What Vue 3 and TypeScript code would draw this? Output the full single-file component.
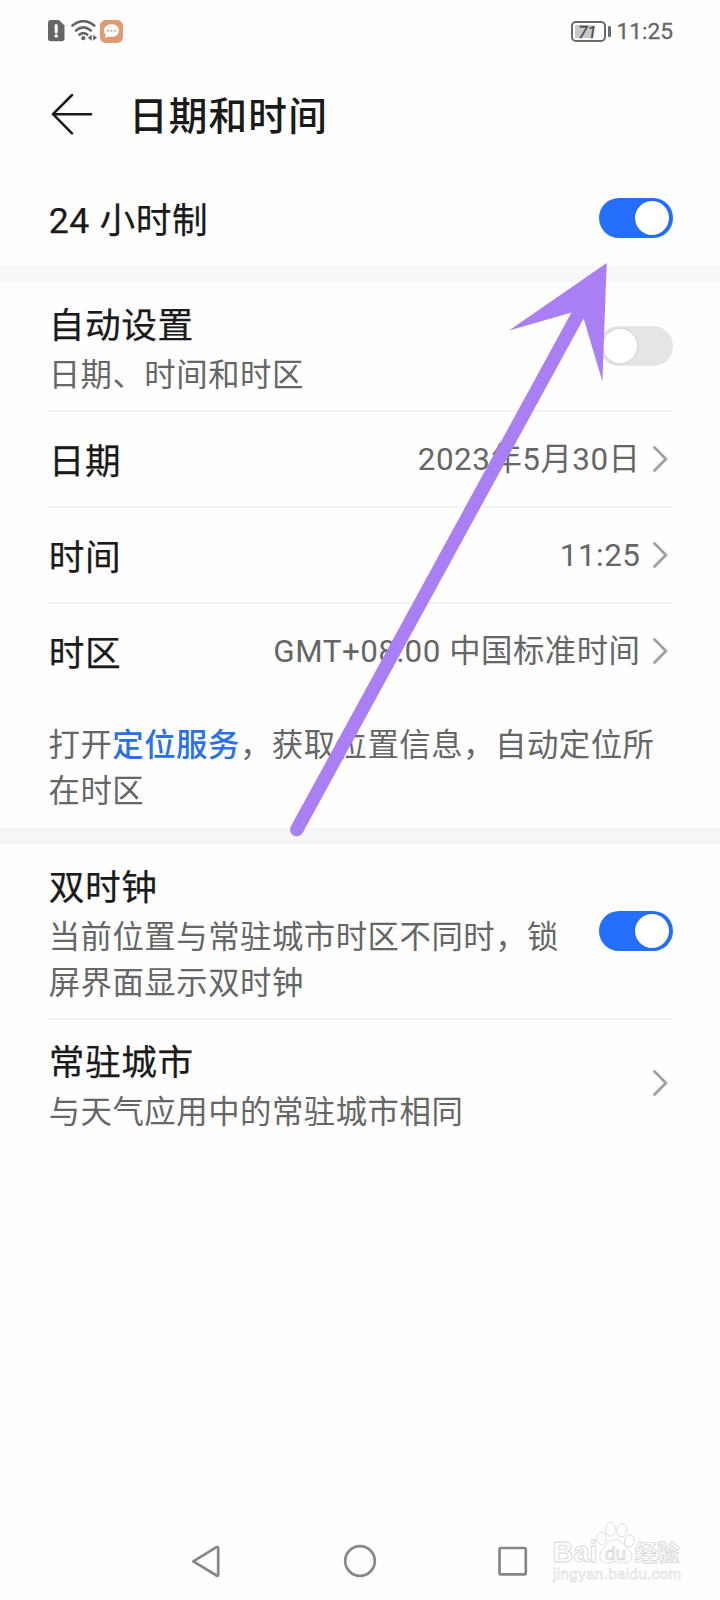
<script setup lang="ts">
import { ref } from 'vue'

interface ValueRow {
  label: string
  value: string
}

const use24Hour = ref(true)
const autoSet = ref(false)
const dualClock = ref(true)

const valueRows: ValueRow[] = [
  { label: '日期', value: '2023年5月30日' },
  { label: '时间', value: '11:25' },
  { label: '时区', value: 'GMT+08:00 中国标准时间' },
]
</script>

<template>
  <div class="screen">
    <header class="status">
      <div class="status-icons">
        <svg class="sim" width="17" height="22" viewBox="0 0 17 22">
          <path d="M3 0H11L16.5 5.5V18.5Q16.5 21.3 13.7 21.3H2.8Q0 21.3 0 18.5V3Q0 0 3 0Z" fill="#666" />
          <path d="M8.2 5.6V12" stroke="#fff" stroke-width="3" stroke-linecap="round" />
          <circle cx="8.2" cy="16" r="1.8" fill="#fff" />
        </svg>
        <svg class="wifi" width="26" height="22" viewBox="0 0 26 22">
          <g fill="none" stroke="#666" stroke-width="2.6" stroke-linecap="round">
            <path d="M1.5 5.6Q12.5 -3.4 23.2 5.6" />
            <path d="M5 10.5Q12.4 4.4 19.8 10.5" />
            <path d="M8.5 14.6Q12.4 11.6 16.2 14.6" />
          </g>
          <circle cx="12.3" cy="18.2" r="2.1" fill="#666" />
          <path d="M20.7 14.6V20.8L16.8 17.7ZM22.2 14.6V20.8L26 17.7Z" fill="#666" />
        </svg>
        <svg class="chat" width="24" height="24" viewBox="0 0 24 24">
          <rect width="23" height="23" rx="6" fill="#e09a73" />
          <path d="M11.6 4.3C16 4.3 19 7 19 10.6S16 17 11.6 17C10.6 17 9.6 16.9 8.7 16.5L5.2 18.2L5.6 14.6C4.5 13.5 4 12.1 4 10.6C4 7 7.2 4.3 11.6 4.3Z" fill="#fff" />
          <g fill="#e09a73">
            <circle cx="7.9" cy="10.7" r="1" /><circle cx="11.5" cy="10.7" r="1" /><circle cx="15.1" cy="10.7" r="1" />
          </g>
        </svg>
      </div>
      <div class="status-right">
        <div class="battery"><span>71</span></div>
        <i class="nub"></i>
        <span class="clock">11:25</span>
      </div>
    </header>

    <div class="heading">
      <svg width="42" height="42" viewBox="0 0 42 42" fill="none" stroke="#1a1a1a" stroke-width="2.5" stroke-linecap="round" stroke-linejoin="round">
        <path d="M21 1L2 20.2L21 39.4M2 20.2H40" />
      </svg>
      <h1>日期和时间</h1>
    </div>

    <section>
      <div class="row single">
        <span class="label">24 小时制</span>
        <button class="switch" :class="{ on: use24Hour }" @click="use24Hour = !use24Hour"><i></i></button>
      </div>
    </section>

    <div class="band"></div>

    <section>
      <div class="row auto">
        <div class="stack">
          <span class="label">自动设置</span>
          <span class="sub">日期、时间和时区</span>
        </div>
        <button class="switch" :class="{ on: autoSet }" @click="autoSet = !autoSet"><i></i></button>
      </div>
      <div v-for="row in valueRows" :key="row.label" class="row value-row">
        <span class="label">{{ row.label }}</span>
        <span class="value">{{ row.value }}</span>
        <svg class="chevron" width="16" height="28" viewBox="0 0 16 28"><path d="M1.5 2.4L13 14L1.5 25.6" /></svg>
      </div>
      <p class="note">打开<a>定位服务</a>，获取位置信息，自动定位所<br />在时区</p>
    </section>

    <div class="band"></div>

    <section>
      <div class="row dual">
        <div class="stack">
          <span class="label">双时钟</span>
          <span class="sub">当前位置与常驻城市时区不同时，锁<br />屏界面显示双时钟</span>
        </div>
        <button class="switch" :class="{ on: dualClock }" @click="dualClock = !dualClock"><i></i></button>
      </div>
      <div class="row city">
        <div class="stack">
          <span class="label">常驻城市</span>
          <span class="sub">与天气应用中的常驻城市相同</span>
        </div>
        <svg class="chevron" width="16" height="28" viewBox="0 0 16 28"><path d="M1.5 2.4L13 14L1.5 25.6" /></svg>
      </div>
    </section>

    <nav class="navbar">
      <svg width="370" height="40" viewBox="0 0 370 40" fill="none" stroke="#878787" stroke-width="2.7" stroke-linejoin="round">
        <path d="M23.3 21.3L46.5 7.2Q48.2 6.4 48.2 8.2V34.6Q48.2 36.4 46.5 35.5Z" />
        <circle cx="190" cy="21" r="14.8" />
        <rect x="329.5" y="8" width="26.3" height="26.3" rx="1.2" />
      </svg>
    </nav>

    <svg class="pointer" width="720" height="860" viewBox="0 0 720 860" fill="#a97ff3">
      <path d="M606.7 263L509 330.5L571.5 312.5L290.9 826.3A6.7 6.7 0 0 0 302.7 832.7L583.6 318.5L602.4 381.5Z" />
    </svg>

    <svg class="watermark" width="150" height="70" viewBox="0 0 150 70">
      <g fill="#fff" stroke="#d8d8d8" stroke-width="0.9">
        <text x="11.5" y="42" font-size="29" font-weight="bold" textLength="45" lengthAdjust="spacingAndGlyphs">Bai</text>
        <ellipse cx="60.5" cy="18.3" rx="4.7" ry="6.3" transform="rotate(-8 60.5 18.3)" />
        <ellipse cx="69.5" cy="9.3" rx="5" ry="6.9" />
        <ellipse cx="81" cy="10.3" rx="5" ry="6.7" transform="rotate(12 81 10.3)" />
        <ellipse cx="88.3" cy="21" rx="4.7" ry="6.3" transform="rotate(12 88.3 21)" />
        <path d="M74.5 19.5C81.5 19.5 82.5 25.5 88 30C93.5 35 91 43 83.5 43C79 43 78 41.8 74.5 41.8S70 43 66 43C58.5 43 56.5 35 61.5 29.5C66 25 68 19.5 74.5 19.5Z" />
        <text x="64" y="40" font-size="19" textLength="21">du</text>
        <text class="cjk" x="93.5" y="40.5" font-size="22.5" font-weight="bold" textLength="45">经验</text>
      </g>
      <text class="url" x="12" y="59" font-size="15" textLength="128">jingyan.baidu.com</text>
    </svg>
  </div>
</template>

<style>
body {
  margin: 0;
  background: #fefefe;
}
</style>

<style scoped>
.screen {
  position: relative;
  display: flex;
  flex-direction: column;
  width: 720px;
  height: 1600px;
  overflow: hidden;
  background: #fefefe;
  color: #1a1a1a;
  font-family: Roboto, "Noto Sans CJK SC", sans-serif;
}
.status {
  display: flex;
  justify-content: space-between;
  height: 62px;
  padding: 0 47px 0 48px;
  box-sizing: border-box;
}
.status-icons {
  display: flex;
  align-items: flex-start;
  padding-top: 20px;
}
.wifi { margin-left: 6px; }
.chat { margin-left: 3px; }
.status-right {
  display: flex;
  align-items: center;
  height: 62px;
}
.battery {
  width: 35px;
  height: 21px;
  box-sizing: border-box;
  border: 2px solid #6a6a6a;
  border-radius: 5px;
  background: linear-gradient(#c8c8c8, #c8c8c8) 2px 2px / 18px 13px no-repeat;
  color: #4a4a4a;
  font-size: 17px;
  font-style: italic;
  line-height: 18px;
  text-align: center;
  text-indent: -1px;
  -webkit-text-stroke: 0.3px #4a4a4a;
}
.nub {
  width: 3px;
  height: 11px;
  margin-left: 2px;
  border-radius: 1px;
  background: #6a6a6a;
}
.clock {
  margin-left: 6px;
  font-size: 22.7px;
  line-height: 62px;
  padding-top: 1px;
  color: #666;
  -webkit-text-stroke: 0.3px #666;
}
.heading {
  display: flex;
  align-items: center;
  height: 106px;
  padding: 0 0 0 51px;
}
h1 {
  margin: 3px 0 0 36px;
  font-size: 38.7px;
  font-weight: 500;
  letter-spacing: 1.1px;
  line-height: 60px;
}
.row {
  display: flex;
  align-items: center;
  justify-content: space-between;
  margin: 0 48px;
  box-sizing: border-box;
}
.single { height: 98px; padding-top: 2px; }
.auto { height: 130px; }
.value-row { height: 96px; }
.auto, .value-row, .dual { border-bottom: 2px solid #f1f1f1; }
.value-row:nth-last-of-type(1) { border-bottom-color: transparent; }
.dual { height: 176px; }
.city { height: 126px; }
.stack {
  display: flex;
  flex-direction: column;
  padding-top: 7px;
}
.label {
  padding-left: 0.7px;
  font-size: 35.7px;
  letter-spacing: 0.6px;
  line-height: 50px;
  -webkit-text-stroke: 0.25px #1a1a1a;
}
.stack .sub { margin-top: 2px; }
.single .label, .value-row .label { padding-top: 6px; }
.sub, .value, .note {
  font-size: 31.4px;
  letter-spacing: 0.5px;
  line-height: 46px;
  color: #666;
}
.sub { padding-left: 0.7px; }
.value { margin-left: auto; margin-right: 12px; padding-top: 2px; }
.note { margin: 23px 48px 13px; height: 92px; white-space: nowrap; padding-left: 0.5px; }
.note a { color: #2970ea; font-weight: 500; }
.band { height: 16px; flex: none; background: #f6f6f6; }
.switch {
  flex: none;
  width: 74px;
  height: 40px;
  padding: 3px 4px;
  border: 0;
  border-radius: 20px;
  background: #e5e5e5;
  display: flex;
  align-items: center;
  margin-right: -1px;
}
.switch i {
  width: 34px;
  height: 34px;
  border-radius: 50%;
  background: #fff;
  box-shadow: 0 0 3px rgba(0, 0, 0, 0.15);
}
.switch.on { background: #256fff; justify-content: flex-end; }
.chevron {
  flex: none;
  margin-right: 3.5px;
  fill: none;
  stroke: #a0a0a0;
  stroke-width: 2.8;
  stroke-linecap: round;
  stroke-linejoin: round;
}
.navbar {
  margin-top: auto;
  height: 60px;
  padding-left: 170px;
}
.pointer {
  position: absolute;
  left: 0;
  top: 0;
  pointer-events: none;
}
.watermark {
  position: absolute;
  left: 541px;
  top: 1520px;
  font-family: "Liberation Sans", sans-serif;
}
.cjk { font-family: "Noto Sans CJK SC", sans-serif; }
.url { fill: #fff; stroke: #dedede; stroke-width: 0.7; }
</style>
